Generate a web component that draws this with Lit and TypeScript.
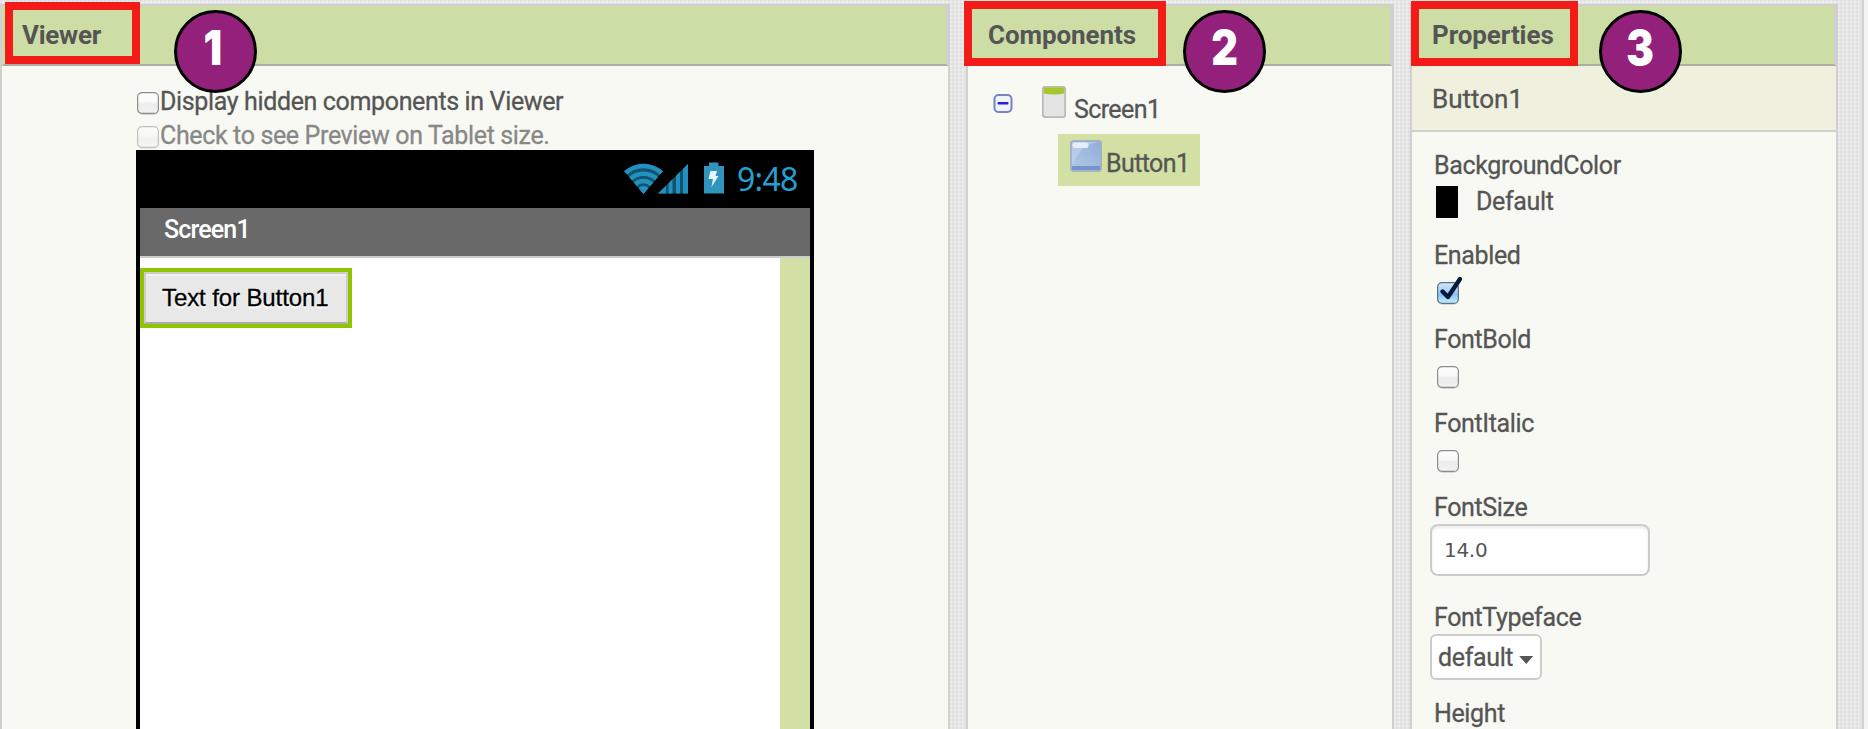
import { LitElement, html, css, svg } from "lit";
import { customElement, property } from "lit/decorators.js";

@customElement("check-box")
class CheckBox extends LitElement {
  @property({ type: Boolean }) checked = false;
  @property({ type: Boolean }) disabled = false;
  static styles = css`
    :host { display: block; width: 22px; height: 22px; flex: none; }
    svg { display: block; overflow: visible; }
    .off { opacity: 0.5; }
  `;
  render() {
    return html`<svg class=${this.disabled ? "off" : ""} width="22" height="22" viewBox="0 0 22 22">
      <defs>
        <linearGradient id="w" x1="0" y1="0" x2="0" y2="1">
          <stop offset="0" stop-color="#fff" /><stop offset="0.45" stop-color="#f8f8f8" />
          <stop offset="0.55" stop-color="#ececec" /><stop offset="1" stop-color="#f2f2f2" />
        </linearGradient>
        <linearGradient id="b" x1="0" y1="0" x2="0" y2="1">
          <stop offset="0" stop-color="#d3e6f8" /><stop offset="0.45" stop-color="#a5cff6" />
          <stop offset="0.55" stop-color="#86bff5" /><stop offset="1" stop-color="#c4f0ff" />
        </linearGradient>
      </defs>
      <rect x="0.2" y="1.2" width="21.6" height="21.8" rx="5" fill="#000" opacity="0.12" />
      <rect x="0.6" y="0.6" width="20.8" height="20.8" rx="4.5" fill=${this.checked ? "url(#b)" : "url(#w)"}
        stroke=${this.checked ? "#5f6f92" : "#8b8b8b"} stroke-width="1.2" />
      ${this.checked
        ? svg`<path d="M5.5 9.5 L11 15 L23 -3" fill="none" stroke="#05193a" stroke-width="4.4" stroke-linecap="round" stroke-linejoin="round" />`
        : null}
    </svg>`;
  }
}

@customElement("app-root")
class AppRoot extends LitElement {
  static styles = css`
    :host {
      display: block; position: relative; width: 1868px; height: 729px; overflow: hidden;
      font-family: Roboto, sans-serif; font-size: 25px; letter-spacing: -0.36px; line-height: 32px;
      color: #555; background: #f3f3f3; white-space: nowrap; -webkit-text-stroke: 0.3px;
    }
    * { box-sizing: border-box; }
    .page {
      display: flex; gap: 16px; width: 1864px; height: 729px; padding-top: 4px;
      border-right: 2px solid #d2d2d2;
      background-color: #ededed;
      background-image:
        repeating-linear-gradient(90deg, rgba(0,0,0,.03) 0 2px, transparent 2px 4px),
        repeating-linear-gradient(0deg, rgba(0,0,0,.03) 0 2px, transparent 2px 4px);
    }
    .panel { flex: none; height: 740px; border: 2px solid #d0d0d0; background: #f8f9f3; }
    .viewer { width: 950px; }
    .components, .properties { width: 428px; }
    .head {
      height: 60px; display: flex; align-items: center; padding: 0 0 1px 18px;
      background: #ccdda6; border: 2px solid #d0d0d0; border-top: 0; border-bottom-color: #adada4;
      font-weight: 700; font-size: 26px; letter-spacing: -0.08px; -webkit-text-stroke: 0;
      border-left: 2px solid #ccdda6;
    }
    .viewer .head { letter-spacing: -0.28px; }
    .viewer .opts { padding: 20px 0 0 135px; }
    .opt { display: flex; height: 34px; }
    .opt check-box { margin-top: 6px; }
    .opt span { margin-left: 1px; }
    .opt.dim { color: #888; height: 30px; }
    .phone { width: 678px; height: 600px; margin-left: 134px; padding: 0 4px; background: #000; }
    .status { height: 58px; display: flex; padding: 12px 10px 0 484px; }
    .status svg { display: block; flex: none; }
    .clock {
      margin-left: 11px; margin-top: 1px; font: 32px/32px "Noto Sans", sans-serif; letter-spacing: -0.7px; color: #259fd1;
      -webkit-text-stroke: 0;
    }
    .title {
      height: 50px; background: #696969; border-bottom: 2px solid #ccc; color: #fff; padding: 6px 0 0 24px;
      font-weight: 500; letter-spacing: -0.85px; -webkit-text-stroke: 0;
    }
    .screen { display: flex; justify-content: space-between; height: 480px; background: #fff; }
    .strip { width: 30px; background: #d2e0a6; }
    .outline { margin-top: 10px; width: 212px; height: 60px; padding: 0; border: 4px solid #8fc400; }
    .btn {
      height: 52px; border: 2px solid #ccc; border-bottom-color: #aaa; background: #e8e8e8; color: #000;
      font: 24px/48px "Liberation Sans", Arial, sans-serif; letter-spacing: -0.1px; padding-left: 16px;
      text-shadow: 0 2px 2px #fff; box-shadow: inset 0 2px 0 #f0f0f0;
    }
    .node { display: flex; }
    .root { height: 68px; padding: 20px 0 0 25px; }
    .root .minus { margin: 8px 29px 0 0; }
    .root span { margin: 8px 0 0 8px; }
    .node span { letter-spacing: -0.6px; }
    .node svg { display: block; flex: none; }
    .sel { width: 142px; height: 52px; margin-left: 90px; background: #d2e0a3; padding: 6px 0 0 12px; }
    .sel span { margin: 8px 0 0 4px; }
    .name {
      height: 66px; padding: 17px 0 0 20px; background: #eff1de; border-bottom: 2px solid #d0d0d0;
      font-size: 26px; letter-spacing: 0;
    }
    .props { display: flex; flex-direction: column; align-items: flex-start; padding: 18px 0 0 18px; }
    .lab { height: 30px; margin-left: 4px; }
    .colour { display: flex; height: 60px; margin-left: 6px; padding-top: 6px; }
    .swatch { width: 22px; height: 32px; background: #000; }
    .colour span { margin-left: 18px; }
    .props check-box { margin: 12px 0 20px 7px; }
    .input {
      width: 220px; height: 52px; margin: 2px 0 26px; border: 2px solid #ccc; border-radius: 8px; background: #fff;
      box-shadow: inset 0 2px 3px rgba(0,0,0,.08); padding-left: 12px;
      font: 20px/49px "DejaVu Sans", sans-serif; letter-spacing: -0.3px; -webkit-text-stroke: 0;
    }
    .select {
      display: flex; width: 112px; height: 46px; margin: 2px 0 18px; border: 2px solid #ccc; border-radius: 6px;
      background: #fff; padding: 6px 0 0 6px;
    }
    .arrow { margin: 14px 0 0 6px; width: 14px; height: 8px; background: #555; clip-path: polygon(0 0, 100% 0, 50% 100%); }
    .mark { position: absolute; border: 8px solid #f21b17; }
    .m1 { left: 5px; top: 2px; width: 135px; height: 62px; }
    .m2 { left: 964px; top: 1px; width: 202px; height: 65px; }
    .m3 { left: 1411px; top: 1px; width: 167px; height: 65px; }
    .badge {
      position: absolute; top: 10px; width: 83px; height: 83px; border: 3px solid #000; border-radius: 50%;
      background: #93217c; color: #fff; text-align: center; -webkit-text-stroke: 0;
      font: 900 48px/69px Inter, Arial, sans-serif; letter-spacing: 0;
    }
    .badge span { display: inline-block; transform: scaleX(0.86); }
    .b1 { left: 174px; padding-right: 5px; }
    .b2 { left: 1183px; }
    .b3 { left: 1599px; }
  `;

  render() {
    return html`
      <div class="page">
        <section class="panel viewer">
          <div class="head">Viewer</div>
          <div class="opts">
            <div class="opt"><check-box></check-box><span>Display hidden components in Viewer</span></div>
            <div class="opt dim"><check-box disabled></check-box><span>Check to see Preview on Tablet size.</span></div>
          </div>
          <div class="phone">
            <div class="status">
              <svg width="102" height="32" viewBox="624 162 102 32">
                <clipPath id="fan"><path d="M624 171 Q643.5 156 663 171 L643.5 194 Z" /></clipPath>
                <g clip-path="url(#fan)">
                  <circle cx="643.5" cy="193" r="31" fill="#12536f" />
                  <g fill="none" stroke="#2391bf" stroke-width="4.6">
                    <circle cx="643.5" cy="193" r="27" /><circle cx="643.5" cy="193" r="19.3" />
                    <circle cx="643.5" cy="193" r="12" />
                  </g>
                  <circle cx="643.5" cy="193" r="7" fill="#2391bf" />
                </g>
                <clipPath id="tri"><path d="M658 193.5 L688 164 V193.5 Z" /></clipPath>
                <g clip-path="url(#tri)">
                  <rect x="658" y="163" width="30" height="31" fill="#12536f" />
                  <path fill="#2391bf" d="M658 163h8v31h-8zM668.500 163h4v31h-4zM676 163h4v31h-4zM683 163h5v31h-5z" />
                </g>
                <path fill="#3194bd" d="M709 162.500h9.500v3.500h5.500v27.500h-20v-27.500h5z" />
                <path fill="#eaf5fa" d="M710.500 171h6.500l-1.500 5h3l-7 11 1.500-8h-4.500z" />
              </svg>
              <span class="clock">9:48</span>
            </div>
            <div class="title">Screen1</div>
            <div class="screen">
              <div class="outline"><div class="btn">Text for Button1</div></div>
              <div class="strip"></div>
            </div>
          </div>
        </section>

        <section class="panel components">
          <div class="head">Components</div>
          <div class="node root">
            <svg class="minus" width="20" height="19" viewBox="0 0 20 19">
              <rect x="1.500" y="1" width="17" height="17" rx="4" fill="#f1f3fa" stroke="#7484c4" stroke-width="2" />
              <rect x="4.500" y="8" width="11" height="2.600" rx="1" fill="#2a1fd8" />
            </svg>
            <svg width="24" height="32" viewBox="0 0 24 32">
              <rect x="0.800" y="0.800" width="22.400" height="30.400" rx="2.500" fill="#e4e4e4" stroke="#b9b9b9" stroke-width="1.800" />
              <path d="M1.800 1.500h20.400v6q-10 2-20.400 0z" fill="#a6c72c" />
            </svg>
            <span>Screen1</span>
          </div>
          <div class="node sel">
            <svg width="32" height="32" viewBox="0 0 32 32">
              <defs><linearGradient id="bl" x1="1" y1="0" x2="0" y2="1">
                <stop offset="0" stop-color="#8fadd8" /><stop offset="1" stop-color="#b5cbe8" />
              </linearGradient></defs>
              <rect x="0.900" y="0.900" width="30.200" height="30.200" rx="2.500" fill="url(#bl)" stroke="#a7b0c0" stroke-width="1.800" />
              <path d="M2 2h27Q10 5 5 21L2 24z" fill="#c3d4ee" opacity=".6" />
              <rect x="2.500" y="2.500" width="16" height="5.500" rx="2.500" fill="#e6edf8" />
              <rect x="2" y="26" width="28" height="4" fill="#7395cc" />
            </svg>
            <span>Button1</span>
          </div>
        </section>

        <section class="panel properties">
          <div class="head">Properties</div>
          <div class="name">Button1</div>
          <div class="props">
            <div class="lab">BackgroundColor</div>
            <div class="colour"><div class="swatch"></div><span>Default</span></div>
            <div class="lab">Enabled</div>
            <check-box checked></check-box>
            <div class="lab">FontBold</div>
            <check-box></check-box>
            <div class="lab">FontItalic</div>
            <check-box></check-box>
            <div class="lab">FontSize</div>
            <div class="input">14.0</div>
            <div class="lab">FontTypeface</div>
            <div class="select"><span>default</span><div class="arrow"></div></div>
            <div class="lab">Height</div>
          </div>
        </section>
      </div>
      <div class="mark m1"></div>
      <div class="mark m2"></div>
      <div class="mark m3"></div>
      <div class="badge b1"><span>1</span></div>
      <div class="badge b2"><span>2</span></div>
      <div class="badge b3"><span>3</span></div>
    `;
  }
}
